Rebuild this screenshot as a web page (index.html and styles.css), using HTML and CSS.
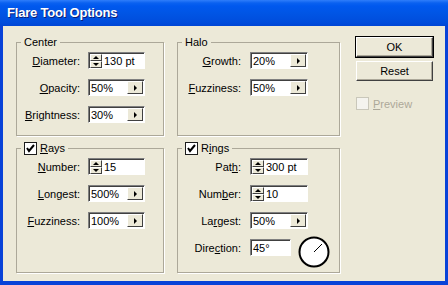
FILE: index.html
```html
<!DOCTYPE html>
<html lang="en">
<head>
  <meta charset="UTF-8">
  <title>Flare Tool Options</title>
  <link rel="stylesheet" href="styles.css">
</head>
<body>
  <div class="window">
    <div class="titlebar">Flare Tool Options</div>
    <div class="content">
      <div class="groups">

        <fieldset class="group">
          <legend>Center</legend>
          <div class="rows">
            <label><u>D</u>iameter:</label>
            <div class="field">
              <div class="spin"><span><i class="up"></i></span><span><i class="down"></i></span></div>
              <div class="value">130 pt</div>
            </div>
            <label><u>O</u>pacity:</label>
            <div class="field">
              <div class="value">50%</div>
              <div class="menu"><i class="right"></i></div>
            </div>
            <label><u>B</u>rightness:</label>
            <div class="field">
              <div class="value">30%</div>
              <div class="menu"><i class="right"></i></div>
            </div>
          </div>
        </fieldset>

        <fieldset class="group">
          <legend>Halo</legend>
          <div class="rows wide">
            <label><u>G</u>rowth:</label>
            <div class="field">
              <div class="value">20%</div>
              <div class="menu"><i class="right"></i></div>
            </div>
            <label><u>F</u>uzziness:</label>
            <div class="field">
              <div class="value">50%</div>
              <div class="menu"><i class="right"></i></div>
            </div>
          </div>
        </fieldset>

        <fieldset class="group">
          <legend><span class="check on"><svg viewBox="0 0 11 11" width="11" height="11"><polyline points="2,5 4,8 9,2" fill="none" stroke="#000" stroke-width="2"/></svg></span><span><u>R</u>ays</span></legend>
          <div class="rows">
            <label><u>N</u>umber:</label>
            <div class="field">
              <div class="spin"><span><i class="up"></i></span><span><i class="down"></i></span></div>
              <div class="value">15</div>
            </div>
            <label><u>L</u>ongest:</label>
            <div class="field">
              <div class="value">500%</div>
              <div class="menu"><i class="right"></i></div>
            </div>
            <label><u>F</u>uzziness:</label>
            <div class="field">
              <div class="value">100%</div>
              <div class="menu"><i class="right"></i></div>
            </div>
          </div>
        </fieldset>

        <fieldset class="group">
          <legend><span class="check on"><svg viewBox="0 0 11 11" width="11" height="11"><polyline points="2,5 4,8 9,2" fill="none" stroke="#000" stroke-width="2"/></svg></span><span>R<u>i</u>ngs</span></legend>
          <div class="rows wide">
            <label>Pat<u>h</u>:</label>
            <div class="field">
              <div class="spin"><span><i class="up"></i></span><span><i class="down"></i></span></div>
              <div class="value">300 pt</div>
            </div>
            <label>Num<u>b</u>er:</label>
            <div class="field">
              <div class="spin"><span><i class="up"></i></span><span><i class="down"></i></span></div>
              <div class="value">10</div>
            </div>
            <label>La<u>r</u>gest:</label>
            <div class="field">
              <div class="value">50%</div>
              <div class="menu"><i class="right"></i></div>
            </div>
            <label>Dire<u>c</u>tion:</label>
            <div class="direction">
              <div class="field short">
                <div class="value">45°</div>
              </div>
              <svg class="dial" viewBox="0 0 32 32" width="32" height="32">
                <circle cx="16" cy="16" r="14.5" fill="#fff" stroke="#000" stroke-width="2"/>
                <line x1="16" y1="16" x2="24" y2="8" stroke="#000" stroke-width="1"/>
              </svg>
            </div>
          </div>
        </fieldset>

      </div>

      <div class="actions">
        <button class="btn default">OK</button>
        <button class="btn">Reset</button>
        <div class="preview"><span class="check off"></span><span><u>P</u>review</span></div>
      </div>
    </div>
  </div>
</body>
</html>
```

FILE: styles.css
```css
body {
  margin: 0;
  font-family: "Liberation Sans", Arial, sans-serif;
  font-size: 11px;
  color: #000;
}

.window {
  width: 448px;
  height: 285px;
  box-sizing: border-box;
  background: #ece9d8;
  border: 3px solid #0842d8;
  border-top: none;
  border-bottom-width: 4px;
  display: flex;
  flex-direction: column;
}

.titlebar {
  height: 26px;
  margin: 0 -3px;
  padding-left: 7px;
  line-height: 26px;
  font-size: 13px;
  font-weight: bold;
  letter-spacing: -0.2px;
  color: #fff;
  text-shadow: 1px 1px 0 #0a1e7a;
  background: linear-gradient(#2f7dfa 0, #0a61f0 3px, #0058ee 6px, #0055e5 50%, #004ddc 85%, #0046d5 100%);
}

.content {
  flex: 1;
  display: flex;
  padding: 10px 0 0 13px;
}

.groups {
  display: grid;
  grid-template-columns: 148px 163px;
  grid-template-rows: 100px 131px;
  column-gap: 13px;
  row-gap: 6px;
}

.group {
  margin: 0;
  padding: 3px 0 0 0;
  border: 1px solid #aca899;
  box-shadow: 1px 1px 0 #fff;
  min-width: 0;
}

legend {
  margin-left: 4px;
  padding: 0 3px;
  height: 13px;
  line-height: 13px;
  display: flex;
  align-items: center;
  gap: 3px;
}

.rows {
  display: grid;
  grid-template-columns: 63px 57px;
  column-gap: 8px;
  row-gap: 10px;
  align-items: center;
}

.rows.wide {
  grid-template-columns: 63px 58px;
  column-gap: 9px;
}

label {
  text-align: right;
  white-space: nowrap;
}

.field {
  height: 17px;
  box-sizing: border-box;
  display: flex;
  background: #fff;
  border: 1px solid;
  border-color: #808080 #fff #fff #808080;
  box-shadow: inset 1px 1px 0 #404040;
}

.field.short {
  width: 41px;
  flex-shrink: 0;
}

.value {
  flex: 1;
  padding: 1px 0 0 2px;
  line-height: 14px;
  white-space: nowrap;
}

.spin {
  width: 12px;
  display: flex;
  flex-direction: column;
  padding: 1px 0 0 1px;
}

.spin span,
.menu {
  background: #ece9d8;
  box-sizing: border-box;
  border: 1px solid;
  border-color: #fff #404040 #404040 #fff;
  display: flex;
  align-items: center;
  justify-content: center;
}

.spin span {
  flex: 1;
}

.menu {
  width: 16px;
  margin: 1px 1px 1px 0;
}

.up,
.down,
.right {
  width: 0;
  height: 0;
  border: 3px solid transparent;
}

.up {
  border-top: none;
  border-bottom: 3px solid #000;
}

.down {
  border-bottom: none;
  border-top: 3px solid #000;
}

.right {
  border-right: none;
  border-left: 3px solid #000;
}

.direction {
  display: flex;
  align-items: center;
  gap: 7px;
  height: 17px;
}

.dial {
  flex-shrink: 0;
  margin-top: 8px;
}

.check {
  width: 13px;
  height: 13px;
  box-sizing: border-box;
  display: inline-flex;
  align-items: center;
  justify-content: center;
  background: #fff;
  border: 1px solid #1c1c1c;
}

.check.off {
  background: #f4f3ee;
  border-color: #c9c7ba;
}

.actions {
  margin-left: 16px;
  padding-top: 1px;
  width: 77px;
  display: flex;
  flex-direction: column;
  gap: 4px;
}

.btn {
  height: 20px;
  font-family: inherit;
  font-size: 11px;
  color: #000;
  background: #ece9d8;
  border: 1px solid;
  border-color: #fff #404040 #404040 #fff;
  box-shadow: inset -1px -1px 0 #aca899;
  padding: 0;
}

.btn.default {
  outline: 1px solid #000;
  outline-offset: 0;
}

.preview {
  margin-top: 12px;
  display: flex;
  align-items: center;
  gap: 4px;
  color: #aca899;
}
```
